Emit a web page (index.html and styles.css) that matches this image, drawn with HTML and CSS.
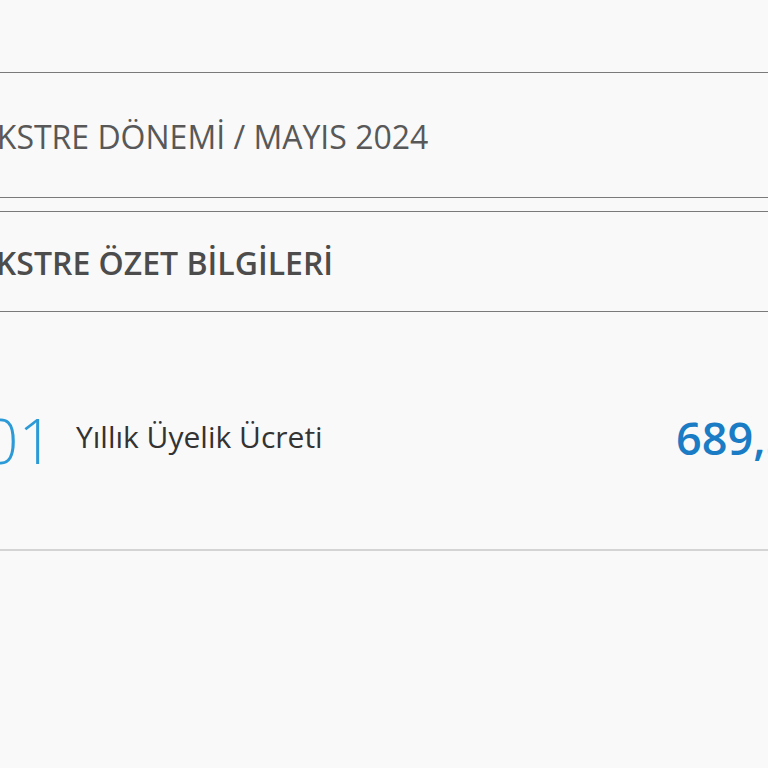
FILE: index.html
```html
<!DOCTYPE html>
<html lang="tr">
<head>
<meta charset="utf-8">
<link rel="stylesheet" href="styles.css">
</head>
<body>
<div class="page">
  <div class="top"></div>
  <div class="period">EKSTRE DÖNEMİ / MAYIS 2024</div>
  <div class="summary">EKSTRE ÖZET BİLGİLERİ</div>
  <div class="item">
    <span class="num">01</span>
    <span class="label">Yıllık Üyelik Ücreti</span>
    <span class="amount">689,50 TL</span>
  </div>
</div>
</body>
</html>
```

FILE: styles.css
```css
html, body {
  margin: 0;
  padding: 0;
  background: #f9f9f9;
  overflow: hidden;
  height: 768px;
}
.page {
  margin-left: -22px;
  width: 1100px;
  font-family: "Open Sans", sans-serif;
}
.top {
  height: 72px;
  border-bottom: 1px solid #7a7a7a;
}
.period {
  height: 125px;
  box-sizing: border-box;
  display: flex;
  align-items: center;
  font-size: 32px;
  color: #585858;
  border-bottom: 1px solid #7a7a7a;
  margin-bottom: 13px;
  padding-top: 2px;
  padding-left: 1px;
}
.summary {
  border-top: 1px solid #7a7a7a;
  border-bottom: 1px solid #7a7a7a;
  height: 101px;
  box-sizing: border-box;
  display: flex;
  align-items: center;
  font-size: 32px;
  font-weight: 600;
  color: #4c4c4c;
  padding-top: 2px;
}
.item {
  height: 239px;
  box-sizing: border-box;
  border-bottom: 2px solid #d4d4d4;
  display: flex;
  align-items: center;
  padding-top: 18px;
}
.num {
  font-size: 62px;
  font-weight: 300;
  color: #2b9ad6;
  margin-left: 5px;
  width: 93px;
}
.label {
  font-size: 30px;
  color: #333;
  width: 600px;
  margin-top: -6px;
}
.amount {
  font-size: 45px;
  font-weight: 600;
  color: #1a7cc4;
  margin-top: -4px;
}
```
